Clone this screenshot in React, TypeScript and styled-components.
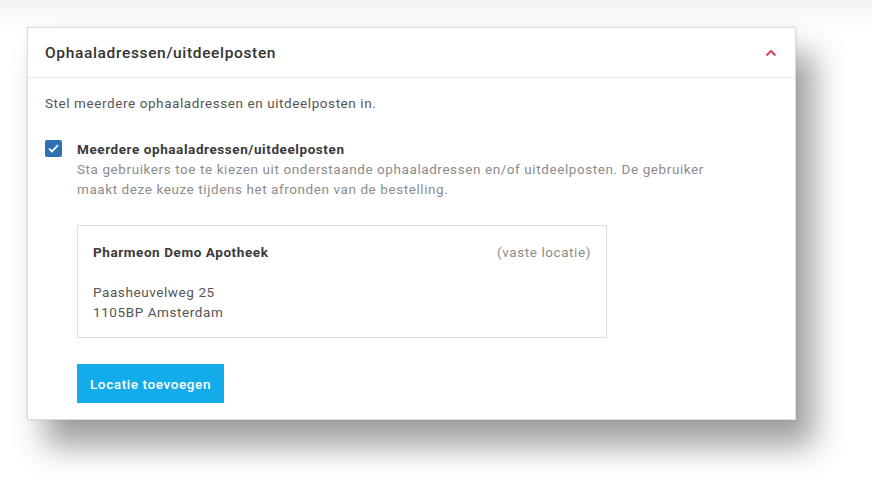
import React from "react";
import styled, { createGlobalStyle } from "styled-components";

const Global = createGlobalStyle`
  html, body { margin: 0; padding: 0; background: #ffffff; }
  body { font-family: Roboto, "Noto Sans", Arial, sans-serif; -webkit-font-smoothing: antialiased; }
`;

const Page = styled.div`
  width: 872px;
  height: 497px;
  box-sizing: border-box;
  padding: 27px 0 0 27px;
  background: linear-gradient(#f4f4f4, #ffffff 30px);
`;

const Card = styled.section`
  width: 769px;
  box-sizing: border-box;
  background: #fff;
  border: 1px solid #dcdcdc;
  box-shadow: 0 0 4px rgba(0, 0, 0, 0.08), 18px 26px 30px rgba(0, 0, 0, 0.38);
`;

const Header = styled.header`
  height: 50px;
  box-sizing: border-box;
  display: flex;
  align-items: center;
  justify-content: space-between;
  padding: 0 16px 0 17px;
  border-bottom: 1px solid #ececec;
`;

const Title = styled.h2`
  margin: 0;
  font-size: 15.5px;
  font-weight: 500;
  color: #333;
  letter-spacing: 0.65px;
`;

const Toggle = styled.button`
  border: 0;
  background: none;
  padding: 0;
  width: 16px;
  height: 16px;
  display: flex;
  align-items: center;
  justify-content: center;
`;

const Body = styled.div`
  padding: 15px 17px 16px 17px;
  font-size: 13.5px;
  letter-spacing: 0.58px;
`;

const Intro = styled.p`
  margin: 0;
  line-height: 20px;
  color: #555;
`;

const OptionRow = styled.div`
  display: flex;
  gap: 15px;
  margin-top: 26px;
`;

const Check = styled.span`
  flex: none;
  width: 17px;
  height: 17px;
  margin-top: 1px;
  background: #2f6fb3;
  border-radius: 2px;
  display: flex;
  align-items: center;
  justify-content: center;
`;

const OptionText = styled.div`
  display: flex;
  flex-direction: column;
`;

const OptionLabel = styled.div`
  line-height: 20px;
  font-weight: 700;
  color: #3a3a3a;
`;

const OptionHelp = styled.div`
  line-height: 20px;
  color: #8c8c8c;
  width: 640px;
`;

const LocationBox = styled.div`
  width: 530px;
  box-sizing: border-box;
  margin-top: 26px;
  border: 1px solid #dedede;
  padding: 16px 15px 15px 15px;
  line-height: 20px;
`;

const LocationHead = styled.div`
  display: flex;
  justify-content: space-between;
  margin-bottom: 20px;
`;

const LocationName = styled.span`
  font-weight: 700;
  color: #3a3a3a;
`;

const LocationTag = styled.span`
  color: #8c8c8c;
`;

const Address = styled.div`
  color: #555;
`;

const Indent = styled.div`
  margin-left: 32px;
`;

const AddButton = styled.button`
  margin-top: 26px;
  width: 147px;
  height: 39px;
  padding: 0;
  border: 0;
  background: #13aceb;
  color: #fff;
  font-family: inherit;
  font-size: 13.5px;
  letter-spacing: 0.6px;
  font-weight: 500;
  cursor: pointer;
`;

export default function App() {
  return (
    <Page>
      <Global />
      <Card>
        <Header>
          <Title>Ophaaladressen/uitdeelposten</Title>
          <Toggle aria-label="Inklappen">
            <svg width="12" height="8" viewBox="0 0 12 8">
              <path d="M1.5 6.5 L6 2 L10.5 6.5" fill="none" stroke="#d9455f" strokeWidth="2" />
            </svg>
          </Toggle>
        </Header>
        <Body>
          <Intro>Stel meerdere ophaaladressen en uitdeelposten in.</Intro>
          <OptionRow>
            <Check>
              <svg width="11" height="9" viewBox="0 0 11 9">
                <path d="M1 4.6 L4 7.4 L10 1.2" fill="none" stroke="#fff" strokeWidth="1.8" />
              </svg>
            </Check>
            <OptionText>
              <OptionLabel>Meerdere ophaaladressen/uitdeelposten</OptionLabel>
              <OptionHelp>
                Sta gebruikers toe te kiezen uit onderstaande ophaaladressen en/of uitdeelposten. De gebruiker
                maakt deze keuze tijdens het afronden van de bestelling.
              </OptionHelp>
            </OptionText>
          </OptionRow>
          <Indent>
            <LocationBox>
              <LocationHead>
                <LocationName>Pharmeon Demo Apotheek</LocationName>
                <LocationTag>(vaste locatie)</LocationTag>
              </LocationHead>
              <Address>Paasheuvelweg 25</Address>
              <Address>1105BP Amsterdam</Address>
            </LocationBox>
            <AddButton>Locatie toevoegen</AddButton>
          </Indent>
        </Body>
      </Card>
    </Page>
  );
}
